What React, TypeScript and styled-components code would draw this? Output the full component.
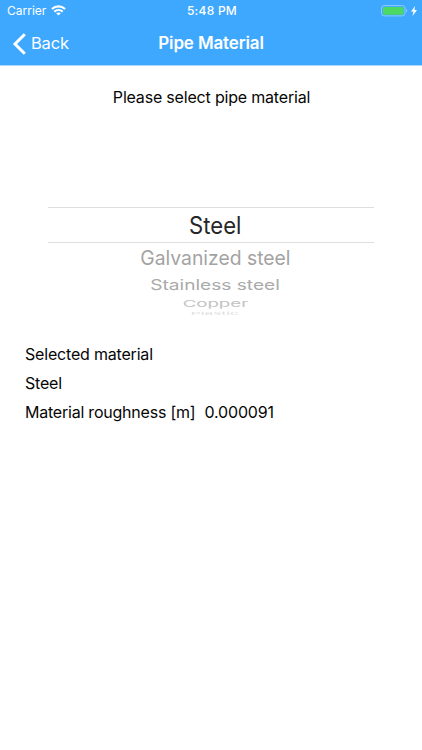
import React from "react";
import styled, { createGlobalStyle } from "styled-components";

const GlobalStyle = createGlobalStyle`
  * { box-sizing: border-box; }
  body { margin: 0; background: #fff; }
`;

const Screen = styled.main`
  width: 422px;
  height: 750px;
  overflow: hidden;
  background: #fff;
  color: #060606;
  font-family: Inter, "Liberation Sans", sans-serif;
`;

const Header = styled.header`
  height: 66px;
  background: #3ea8ff;
  border-bottom: 1px solid #a9d8fb;
  color: #fff;
`;

const StatusBar = styled.div`
  display: grid;
  grid-template-columns: 1fr auto 1fr;
  align-items: center;
  height: 22px;
  padding: 0 5px 0 7px;
`;

const StatusGroup = styled.div<{ $end?: boolean }>`
  display: flex;
  align-items: center;
  justify-content: ${(p) => (p.$end ? "flex-end" : "flex-start")};
  gap: ${(p) => (p.$end ? 3 : 5)}px;
`;

const Label = styled.span<{ $size: number; $weight?: number; $spacing?: number }>`
  font-size: ${(p) => p.$size}px;
  font-weight: ${(p) => p.$weight ?? 400};
  letter-spacing: ${(p) => p.$spacing ?? 0}px;
  line-height: 1.2;
  white-space: pre;
`;

const NavBar = styled.nav`
  display: grid;
  grid-template-columns: 1fr auto 1fr;
  align-items: center;
  height: 43px;
  padding: 0 12px;
`;

const BackButton = styled.button`
  display: flex;
  align-items: center;
  justify-self: start;
  gap: 5px;
  padding: 0;
  border: 0;
  background: none;
  color: inherit;
  font-family: inherit;
`;

const Prompt = styled.p`
  display: flex;
  justify-content: center;
  margin: 0;
  padding: 22px 0 0 1px;
  height: 141px;
`;

const Picker = styled.div`
  width: 326px;
  height: 109px;
  margin-left: 48px;
`;

const Row = styled.div<{ $height: number; $color: string; $selected?: boolean }>`
  display: flex;
  align-items: center;
  justify-content: center;
  height: ${(p) => p.$height}px;
  padding: ${(p) => (p.$selected ? "2px 0 0 8px" : "0 0 0 8px")};
  color: ${(p) => p.$color};
  border: solid #dedede;
  border-width: ${(p) => (p.$selected ? "1px 0" : "0")};
`;

const RowText = styled.span<{ $x: number; $y: number }>`
  font-size: 23px;
  line-height: 28px;
  white-space: nowrap;
  transform: scale(${(p) => p.$x}, ${(p) => p.$y});
`;

const Details = styled.section`
  display: flex;
  flex-direction: column;
  padding: 24px 25px;
`;

const DetailLine = styled.div`
  display: flex;
  align-items: center;
  gap: 9px;
  height: 29px;
`;

const rows = [
  { name: "Steel", height: 36, color: "#262626", x: 0.96, y: 1.03, selected: true },
  { name: "Galvanized steel", height: 29, color: "#a3a3a3", x: 0.84, y: 0.86 },
  { name: "Stainless steel", height: 25, color: "#aaaaaa", x: 0.83, y: 0.64 },
  { name: "Copper", height: 14, color: "#c2c2c2", x: 0.81, y: 0.4 },
  { name: "Plastic", height: 6, color: "#dedede", x: 0.67, y: 0.17 },
];

const WifiIcon = () => (
  <svg width="15" height="11" viewBox="0 0 15 11" fill="none" stroke="#fff" strokeWidth="2.1">
    <path d="M.9 4.1C4.7.5 10.3.5 14.1 4.1M3.3 6.7c2.4-2.3 6-2.3 8.4 0" />
    <path d="M7.5 10.5 5.2 8.3c1.3-1.2 3.3-1.2 4.6 0Z" fill="#fff" stroke="none" />
  </svg>
);

const BatteryIcon = () => (
  <svg width="27" height="12" viewBox="0 0 27 12">
    <rect x=".6" y=".6" width="23.3" height="10.3" rx="2.4" fill="none" stroke="#8bcbff" strokeWidth="1" />
    <rect x="2" y="2" width="20.5" height="7.7" rx="1.2" fill="#4bd964" />
    <path d="M25 3.8c1.6.6 1.6 3.3 0 3.9Z" fill="#8bcbff" />
  </svg>
);

const BoltIcon = () => (
  <svg width="6" height="10" viewBox="0 0 6 10">
    <path d="M4.2 0 0 5.6h2.4L1.5 10 6 4H3.4Z" fill="#fff" />
  </svg>
);

export default function App() {
  return (
    <Screen>
      <GlobalStyle />
      <Header>
        <StatusBar>
          <StatusGroup>
            <Label $size={12} $spacing={0}>Carrier</Label>
            <WifiIcon />
          </StatusGroup>
          <Label $size={12} $weight={550} $spacing={0.25}>5:48 PM</Label>
          <StatusGroup $end>
            <BatteryIcon />
            <BoltIcon />
          </StatusGroup>
        </StatusBar>
        <NavBar>
          <BackButton>
            <svg width="14" height="22" viewBox="0 0 14 22" fill="none" stroke="#fff" strokeWidth="3">
              <path d="M12.8 1.2 3 11l9.8 9.8" />
            </svg>
            <Label $size={16.5} $spacing={-0.2}>Back</Label>
          </BackButton>
          <Label $size={17} $weight={600} $spacing={-0.14}>Pipe Material</Label>
        </NavBar>
      </Header>
      <Prompt><Label $size={16} $spacing={-0.19}>Please select pipe material</Label></Prompt>
      <Picker>
        {rows.map((r) => (
          <Row key={r.name} $height={r.height} $color={r.color} $selected={r.selected}>
            <RowText $x={r.x} $y={r.y}>{r.name}</RowText>
          </Row>
        ))}
      </Picker>
      <Details>
        <DetailLine><Label $size={16} $spacing={-0.19}>Selected material</Label></DetailLine>
        <DetailLine><Label $size={16} $spacing={-0.19}>Steel</Label></DetailLine>
        <DetailLine>
          <Label $size={16} $spacing={-0.22}>Material roughness [m]</Label>
          <Label $size={16} $spacing={-0.16}>0.000091</Label>
        </DetailLine>
      </Details>
    </Screen>
  );
}
